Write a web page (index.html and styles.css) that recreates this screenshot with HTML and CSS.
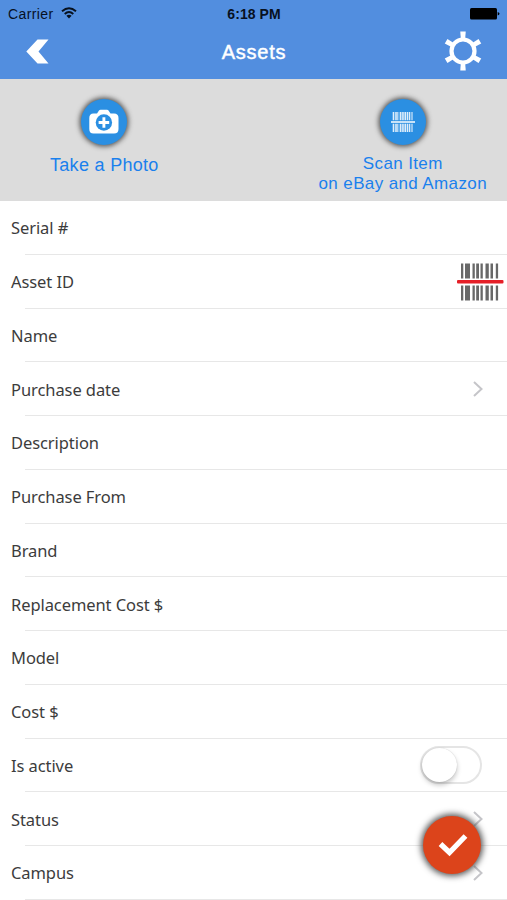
FILE: index.html
```html
<!DOCTYPE html>
<html lang="en">
<head>
<meta charset="utf-8">
<title>Assets</title>
<link rel="stylesheet" href="styles.css">
</head>
<body>
<div class="screen">
  <header class="header">
    <div class="status">
      <div class="status-left"><span class="carrier">Carrier</span>
        <svg class="wifi" width="16" height="12" viewBox="0 0 16 12" fill="none" stroke="#07111f" stroke-width="1.9"><path d="M1 4.2Q8-1.8 15 4.2M3.7 7Q8 3.2 12.3 7"/><path d="M5.4 8.7Q8 6.6 10.6 8.7L8 11.5Z" fill="#07111f" stroke="none"/></svg>
      </div>
      <span class="time">6:18 PM</span>
      <div class="status-right"><svg width="30" height="12" viewBox="0 0 30 12"><rect width="27" height="11.5" rx="1.5"/><path d="M27.7 4Q29.5 4.500 29.500 5.800T27.700 7.600Z"/></svg></div>
    </div>
    <nav class="nav">
      <svg class="back" width="23" height="25" viewBox="0 0 23 25"><path fill="#fff" d="M11.500 .500H22.500L12.500 12.500L22.500 24.500H11.500L.300 12.500Z"/></svg>
      <h1 class="title">Assets</h1>
      <svg class="gear" width="40" height="40" viewBox="-20 -20 40 40">
        <defs><path id="tooth" d="M-2.700-19.500H2.700L2.200-12H-2.200Z"/></defs>
        <circle r="11.500" fill="none" stroke="#fff" stroke-width="4.200"/>
        <g fill="#fff"><use href="#tooth"/><use href="#tooth" transform="rotate(60)"/><use href="#tooth" transform="rotate(120)"/><use href="#tooth" transform="rotate(180)"/><use href="#tooth" transform="rotate(240)"/><use href="#tooth" transform="rotate(300)"/></g>
      </svg>
    </nav>
  </header>
  <section class="actions">
    <div class="action photo">
      <div class="round"><svg width="30" height="26" viewBox="0 0 30 26"><path fill="#fff" d="M4.500 4.500H8L10 1.500Q10.500 .700 11.500 .700H18Q19 .700 19.500 1.500L21.500 4.500H25Q29.500 4.500 29.500 9V20Q29.500 24.500 25 24.500H4.500Q.300 24.500 .300 20V9Q.300 4.500 4.500 4.500Z"/><circle cx="14.900" cy="13.500" r="8.200" fill="#2b8fe2"/><path d="M14.900 8.200V18.800M9.600 13.500H20.200" stroke="#fff" stroke-width="2.900"/></svg></div>
      <div class="action-label">Take a Photo</div>
    </div>
    <div class="action scan">
      <div class="round"><svg width="24" height="20" viewBox="0 0 24 20" stroke="#fff"><g stroke-opacity=".85"><path stroke-width="1.600" d="M2.500 0V8.300M5 0V8.300M9.500 0V8.300M14.500 0V8.300M18.500 0V8.300M2.500 11.700V20M5 11.700V20M9.500 11.700V20M14.500 11.700V20M18.500 11.700V20"/><path stroke-width="1.100" d="M6.800 0V8.300M11.300 0V8.300M12.800 0V8.300M16.500 0V8.300M21 0V8.300M6.800 11.700V20M11.300 11.700V20M12.800 11.700V20M16.500 11.700V20M21 11.700V20"/></g><path stroke-width="1.500" d="M0 10H24"/></svg></div>
      <div class="action-label">Scan Item<br>on eBay and Amazon</div>
    </div>
  </section>
  <main class="list">
    <div class="row"><span>Serial #</span></div>
    <div class="row"><span>Asset ID</span>
      <svg class="barcode" width="47" height="38" viewBox="0 0 47 38"><path id="bars" fill="#686868" d="M4 .500h2.300v15H4zM8 .500h5v15H8zM15.500 .500h2.300v15h-2.300zM19.200 .500h2.800v15h-2.800zM23.500 .500h2.300v15h-2.300zM28.500 .500h3.300v15h-3.300zM33.500 .500h2.500v15h-2.500zM38.800 .500h2.300v15h-2.300z"/><use href="#bars" y="22"/><rect y="17" width="46.500" height="3.500" rx="1" fill="#e51f27"/></svg>
    </div>
    <div class="row"><span>Name</span></div>
    <div class="row"><span>Purchase date</span><svg class="chevron" width="10" height="16" viewBox="0 0 10 16"><path d="M1 1L8.500 8L1 15"/></svg></div>
    <div class="row"><span>Description</span></div>
    <div class="row"><span>Purchase From</span></div>
    <div class="row"><span>Brand</span></div>
    <div class="row"><span>Replacement Cost $</span></div>
    <div class="row"><span>Model</span></div>
    <div class="row"><span>Cost $</span></div>
    <div class="row"><span>Is active</span><div class="switch"><div class="knob"></div></div></div>
    <div class="row"><span>Status</span><svg class="chevron" width="10" height="16" viewBox="0 0 10 16"><path d="M1 1L8.500 8L1 15"/></svg></div>
    <div class="row"><span>Campus</span><svg class="chevron" width="10" height="16" viewBox="0 0 10 16"><path d="M1 1L8.500 8L1 15"/></svg></div>
  </main>
  <div class="confirm"><svg class="check" width="30" height="24" viewBox="0 0 30 24"><path d="M2.500 11L11.500 19.500L27.500 3" fill="none" stroke="#fff" stroke-width="5.300"/></svg></div>
</div>
</body>
</html>
```
FILE: styles.css
```css
* { box-sizing: border-box; }
body { margin: 0; background: #fff; }
svg { display: block; flex: none; }
.screen { position: relative; width: 507px; height: 900px; overflow: hidden; font-family: "Liberation Sans", sans-serif; }
.header { height: 79px; background: #528edf; }
.status { display: grid; grid-template-columns: 1fr auto 1fr; height: 27px; padding: 0 7px 0 8px; align-items: center; color: #07111f; }
.status-left { display: flex; align-items: center; gap: 7px; }
.carrier { font-size: 14px; letter-spacing: .4px; }
.wifi { margin-top: -2px; }
.time { font-size: 14px; font-weight: 700; letter-spacing: .05px; }
.status-right { display: flex; justify-content: flex-end; }
.nav { display: grid; grid-template-columns: 1fr auto 1fr; align-items: center; height: 48px; padding: 0 24px 0 26px; }
.title { margin: 3px 0 0; color: #fff; font-size: 20px; font-weight: 400; letter-spacing: .75px; -webkit-text-stroke: .45px #fff; transform: translateX(-.5px); }
.gear { justify-self: end; }
.actions { display: flex; justify-content: space-between; height: 122px; padding: 20px 20px 0 50px; background: #dcdcdc; }
.action { display: flex; flex-direction: column; align-items: center; text-align: center; }
.round { display: flex; align-items: center; justify-content: center; width: 46px; height: 46px; border-radius: 50%; background: #2b8fe2; box-shadow: 0 0 5px 1.5px #555; }
.action-label { margin-top: 9px; color: #1a80ed; font-size: 18px; line-height: 22px; letter-spacing: .3px; white-space: nowrap; }
.scan .action-label { font-size: 17px; line-height: 20px; letter-spacing: .38px; }
.row { position: relative; display: flex; align-items: center; justify-content: space-between; height: 53.75px; padding: 0 24px 0 11px; color: #3c3c3c; font: 16.5px "Noto Sans", sans-serif; letter-spacing: -.08px; }
.row::after { content: ""; position: absolute; left: 25px; right: 0; bottom: 0; height: 1px; background: #e7e7e7; }
.barcode { margin-right: -21px; }
.chevron { fill: none; stroke: #c5c5c9; stroke-width: 2; }
.switch { width: 62px; height: 38px; margin-right: 1px; border: 2px solid #e5e5e5; border-radius: 19px; }
.knob { width: 35px; height: 34px; border-radius: 50%; background: #fff; box-shadow: 0 3px 5px rgba(0,0,0,.23), 0 0 1px rgba(0,0,0,.2); }
.confirm { position: absolute; left: 423px; top: 816px; display: flex; align-items: center; justify-content: center; width: 58px; height: 58px; border-radius: 50%; background: #dc441b; box-shadow: 0 0 6px 2px #555; }
.check { margin-left: 2px; }
```
